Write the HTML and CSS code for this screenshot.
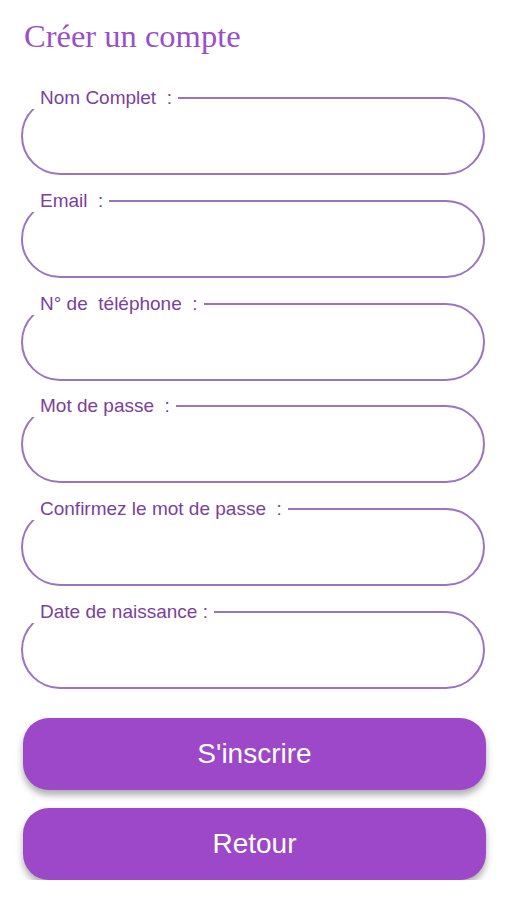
FILE: index.html
```html
<!DOCTYPE html>
<html lang="fr">
<head>
  <meta charset="UTF-8">
  <meta name="viewport" content="width=device-width, initial-scale=1.0">
  <title>Créer un compte</title>
  <link rel="stylesheet" href="styles.css">
</head>
<body>
  <h1 class="heading">Créer un compte</h1>

  <form class="signup-form">
    <!-- Nom -->
    <fieldset class="field">
      <legend>Nom Complet  :</legend>
      <input type="text" id="full-name">
    </fieldset>

    <!-- Email -->
    <fieldset class="field">
      <legend>Email  :</legend>
      <input type="email" id="email">
    </fieldset>

    <!-- Telephone -->
    <fieldset class="field">
      <legend>N° de  téléphone  :</legend>
      <input type="tel" id="phone">
    </fieldset>

    <!-- Mot de passe -->
    <fieldset class="field">
      <legend>Mot de passe  :</legend>
      <input type="password" id="password">
    </fieldset>

    <fieldset class="field">
      <legend>Confirmez le mot de passe  :</legend>
      <input type="password" id="password-confirm">
    </fieldset>

    <!-- Date de naissance -->
    <fieldset class="field">
      <legend>Date de naissance :</legend>
      <input type="text" id="birth-date">
    </fieldset>

    <div class="actions">
      <button type="submit" class="btn">S'inscrire</button>
      <button type="button" class="btn">Retour</button>
    </div>
  </form>
</body>
</html>
```

FILE: styles.css
```css
body {
  margin: 0;
  padding-top: 17px;
  background-color: #ffffff;
  font-family: "Liberation Sans", Arial, sans-serif;
}
.heading {
  margin: 0 0 32px 24px;
  font-family: "Liberation Serif", "Times New Roman", serif;
  font-size: 32.5px;
  line-height: 38px;
  font-weight: normal;
  color: #9a4fc8;
}
.signup-form {
  display: flex;
  flex-direction: column;
  gap: 14.8px;
}
.field {
  margin: 0 22px 0 21px;
  padding: 0 20px 0 9px;
  border: 2px solid #9a74c0;
  border-radius: 40px;
  min-width: 0;
}
.field legend {
  padding: 0 6px 0 8px;
  font-size: 19px;
  line-height: 22px;
  color: #7b3f9c;
  white-space: pre;
}
.field input {
  display: block;
  width: 100%;
  height: 64px;
  padding: 0 10px;
  border: none;
  outline: none;
  background: transparent;
  font-size: 19px;
  box-sizing: border-box;
}
.actions {
  display: flex;
  flex-direction: column;
  gap: 18px;
  margin: 14px 21px 0 23px;
}
.btn {
  height: 72px;
  width: 100%;
  border: none;
  border-radius: 26px;
  background-color: #9d48c8;
  color: #ffffff;
  font-family: "Liberation Sans", Arial, sans-serif;
  font-size: 28px;
  box-shadow: 0 5px 7px rgba(0, 0, 0, 0.32);
  cursor: pointer;
}
.btn:hover {
  background-color: #8c3bb6;
}
```
